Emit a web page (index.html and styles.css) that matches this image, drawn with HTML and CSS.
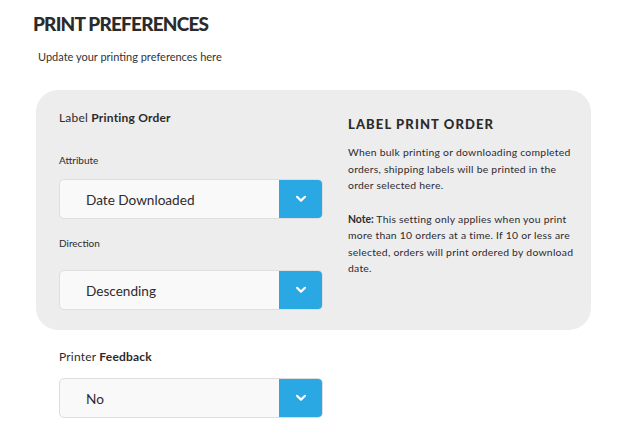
FILE: index.html
```html
<!DOCTYPE html>
<html>
<head>
<meta charset="utf-8">
<link rel="stylesheet" href="styles.css">
</head>
<body>
<div class="page">
  <h1 class="title">PRINT PREFERENCES</h1>
  <p class="subtitle">Update your printing preferences here</p>

  <section class="panel">
    <div class="col-left">
      <div class="group-label">Label <b>Printing Order</b></div>
      <div class="field-label field-first">Attribute</div>
      <div class="select">
        <span class="select-value">Date Downloaded</span>
        <span class="select-btn"><svg width="12" height="8" viewBox="0 0 12 8"><path d="M2 1.8 L6 5.6 L10 1.8" fill="none" stroke="#fff" stroke-width="2.2" stroke-linecap="round" stroke-linejoin="round"/></svg></span>
      </div>
      <div class="field-label field-second">Direction</div>
      <div class="select">
        <span class="select-value">Descending</span>
        <span class="select-btn"><svg width="12" height="8" viewBox="0 0 12 8"><path d="M2 1.8 L6 5.6 L10 1.8" fill="none" stroke="#fff" stroke-width="2.2" stroke-linecap="round" stroke-linejoin="round"/></svg></span>
      </div>
    </div>
    <div class="col-right">
      <h2 class="info-title">LABEL PRINT ORDER</h2>
      <p class="info-text">When bulk printing or downloading completed orders, shipping labels will be printed in the order selected here.</p>
      <p class="info-text"><b class="note">Note:</b> This setting only applies when you print more than 10 orders at a time. If 10 or less are selected, orders will print ordered by download date.</p>
    </div>
  </section>

  <div class="below">
    <div class="group-label">Printer <b>Feedback</b></div>
    <div class="select select-feedback">
      <span class="select-value">No</span>
      <span class="select-btn"><svg width="12" height="8" viewBox="0 0 12 8"><path d="M2 1.8 L6 5.6 L10 1.8" fill="none" stroke="#fff" stroke-width="2.2" stroke-linecap="round" stroke-linejoin="round"/></svg></span>
    </div>
  </div>
</div>
</body>
</html>
```
FILE: styles.css
```css
* { box-sizing: border-box; }
html, body { margin: 0; padding: 0; background: #fff; }
body {
  font-family: "Lato", "Open Sans", sans-serif;
  color: #2e2a2e;
}
.page {
  padding: 12px 0 0 33px;
  width: 623px;
}
.title {
  margin: 0;
  font-size: 19px;
  line-height: 24px;
  font-weight: 900;
  color: #2b2b2b;
  letter-spacing: -0.8px;
}
.subtitle {
  margin: 14px 0 0 5px;
  font-size: 11px;
  line-height: 14px;
  color: #333;
}
.panel {
  margin: 26px 0 0 3px;
  width: 555px;
  height: 240px;
  background: #ededed;
  border-radius: 22px;
  display: flex;
  padding: 20px 0 0 23px;
}
.col-left {
  width: 264px;
}
.group-label {
  font-size: 12px;
  line-height: 16px;
  color: #2e2a2e;
  letter-spacing: 0.2px;
}
.group-label b { font-weight: 700; color: #2b2b2b; }
.field-label {
  font-size: 10px;
  line-height: 14px;
  color: #2e2a2e;
}
.field-first { margin-top: 27px; margin-bottom: 12px; }
.field-second { margin-top: 17px; margin-bottom: 20px; }
.select {
  display: flex;
  height: 40px;
  width: 264px;
  background: #f9f9f9;
  border: 1px solid #dedede;
  border-radius: 5px;
  overflow: hidden;
}
.select-value {
  flex: 1;
  display: flex;
  align-items: center;
  padding-left: 26px;
  font-size: 13.6px;
  color: #2e2a2e;
  padding-top: 2px;
}
.select-btn {
  width: 44px;
  margin: -1px -1px -1px 0;
  background: #29a8e4;
  display: flex;
  align-items: center;
  justify-content: center;
}
.col-right {
  margin-left: 25px;
  width: 230px;
  padding-top: 6px;
}
.info-title {
  margin: 0;
  font-size: 13px;
  line-height: 16px;
  font-weight: 900;
  color: #2b2b2b;
  letter-spacing: 1.1px;
}
.info-text {
  margin: 12px 0 0 0;
  font-size: 10.4px;
  line-height: 16.5px;
  letter-spacing: 0.25px;
  color: #2e2a2e;
}
.info-text + .info-text { margin-top: 17px; }
.info-text .note { font-weight: 700; color: #2b2b2b; letter-spacing: 0; }
.below {
  padding: 19px 0 0 26px;
}
.select-feedback { margin-top: 13px; }
```
